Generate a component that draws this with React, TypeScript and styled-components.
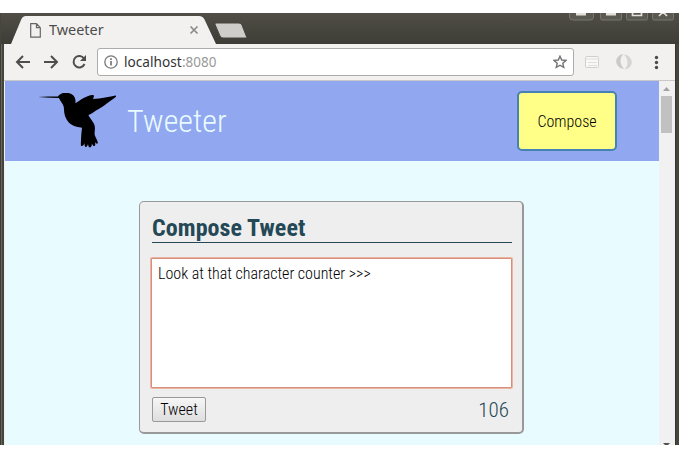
import React from "react";
import styled, { createGlobalStyle } from "styled-components";

const Global = createGlobalStyle`
  * { box-sizing: border-box; }
  body { margin: 0; background: #fff; overflow: hidden; }
  svg { display: block; }
`;

const Screen = styled.div`
  width: 679px;
  height: 458px;
  padding: 13px 0;
  background: #fff;
`;

const Window = styled.div`
  width: 679px;
  height: 432px;
  overflow: hidden;
  display: flex;
  flex-direction: column;
  background: #45443d;
  font-family: "Noto Sans", sans-serif;
`;

const TitleBar = styled.div`
  height: 31px;
  flex: none;
  display: flex;
  justify-content: space-between;
  background: linear-gradient(#504e46, #3d3c36);
  border-left: 1px solid #45443e;
`;

const TabStrip = styled.div`
  position: relative;
  width: 250px;
  height: 31px;
`;

const TabShapes = styled.svg`
  position: absolute;
  left: 0;
  top: 0;
`;

const TabContent = styled.div`
  position: relative;
  display: flex;
  align-items: center;
  height: 34px;
  padding-left: 29px;
`;

const Label = styled.span<{ $size: number; $color: string; $scale?: number }>`
  display: inline-block;
  white-space: nowrap;
  font-size: ${(p) => p.$size}px;
  line-height: 20px;
  color: ${(p) => p.$color};
  transform: scaleX(${(p) => p.$scale ?? 1});
  transform-origin: left center;
`;

const TabLabel = styled(Label)`
  width: 140px;
  margin-left: 8px;
`;

const Frame = styled.div`
  flex: 1;
  min-height: 0;
  display: flex;
  padding: 0 4px;
  background: linear-gradient(90deg, #3c3b35 0 1px, #68665e 1px 2px, #45433c 2px 675px, #36352f 675px 676px, #45443d 676px);
`;

const Browser = styled.div`
  flex: 1;
  min-width: 0;
  display: flex;
  flex-direction: column;
  background: #f2f1f0;
`;

const Toolbar = styled.div`
  height: 37px;
  flex: none;
  display: flex;
  align-items: center;
  background: #f2f1f0;
  border-bottom: 1px solid #c9c8c7;
`;

const NavIcons = styled.div`
  width: 93px;
`;

const AddressBar = styled.div`
  width: 477px;
  height: 28px;
  display: flex;
  align-items: center;
  padding: 0 6px;
  background: #fff;
  border: 1px solid #adacab;
  border-radius: 3px;
`;

const Address = styled.div`
  flex: 1;
  display: flex;
  margin-left: 6px;
`;

const Host = styled(Label)`
  width: 58px;
`;

const Page = styled.div`
  flex: 1;
  min-height: 0;
  display: flex;
  margin-left: 1px;
`;

const Content = styled.main`
  width: 654px;
  display: flex;
  flex-direction: column;
  background: #e8fbff;
  font-family: "Roboto Condensed", Roboto, sans-serif;
  font-stretch: 75%;
`;

const Header = styled.header`
  height: 80px;
  flex: none;
  display: flex;
  align-items: center;
  padding: 0 42px 0 33px;
  background: #91a7f0;
`;

const Brand = styled.h1`
  flex: 1;
  margin: 0 0 0 10px;
  font-size: 32px;
  line-height: 40px;
  font-weight: 300;
  color: #e8fbff;
`;

const ComposeButton = styled.button`
  width: 100px;
  height: 60px;
  padding: 0;
  border: 2px solid #4682b4;
  border-radius: 5px;
  background: #ffff88;
  color: #000;
  font: inherit;
  font-size: 16px;
  font-weight: 300;
`;

const Card = styled.section`
  width: 385px;
  height: 233px;
  margin: 40px 0 0 134px;
  padding: 12px 9px 0 12px;
  background: #eee;
  border: 1px solid #999;
  border-right-width: 2px;
  border-bottom-width: 2px;
  border-radius: 5px;
`;

const Heading = styled.h2`
  width: 360px;
  height: 29px;
  margin: 0 0 15px;
  border-bottom: 1px solid #244855;
  color: #244855;
  font-size: 24px;
  line-height: 28px;
  font-weight: 700;
  letter-spacing: 0.07px;
`;

const TweetText = styled.textarea`
  display: block;
  width: 361px;
  height: 130px;
  margin: 0 0 0 -1px;
  padding: 5px 6px;
  border: 1px solid #d98e77;
  border-radius: 1px;
  box-shadow: 0 0 0 1px #eab5a4;
  background: #fff;
  color: #000;
  font: inherit;
  font-size: 16px;
  line-height: 19px;
  font-weight: 300;
  resize: none;
  outline: none;
`;

const CardFooter = styled.div`
  width: 357px;
  display: flex;
  justify-content: space-between;
  align-items: center;
  margin-top: 9px;
`;

const TweetButton = styled.button`
  width: 54px;
  height: 25px;
  padding: 0;
  border: 1px solid #999;
  border-radius: 2px;
  background: linear-gradient(#f6f6f6, #dedede);
  color: #000;
  font: inherit;
  font-size: 16px;
  font-weight: 300;
`;

const Counter = styled.span`
  color: #244855;
  font-size: 21px;
  line-height: 24px;
  font-weight: 300;
`;

const Scrollbar = styled.div`
  width: 16px;
  display: flex;
  flex-direction: column;
  align-items: center;
  background: #f1f1f1;
`;

const Thumb = styled.div`
  width: 11px;
  height: 37px;
  margin-right: 1px;
  background: #c1c1c1;
`;

const Grow = styled.div`
  flex: 1;
`;

function Hummingbird() {
  return (
    <svg width="79" height="56" viewBox="38 91.700 79 56">
      <path
        fill="#000"
        d="M38 95.6 L48 95.1 L58 95.1 C60.500 91.8 64 91.200 67 91.400 C72 92 75 95 75.400 98.500 L75.600 102 C80 98.500 87 94 92.500 93.600 C94.500 93.400 94 95.500 93 97.800 C101 97.300 110 95.400 115.500 94.200 C117 94.400 115.600 96 113.800 97.200 C107 102 101 107 96 109.200 C93 111.500 91 112.500 88.400 113.800 C89 116 92 119 94 122.500 C96 127 94 130.500 94.800 134 C96 137 98 140 97.800 142 C96.800 143 95.400 141.500 95 141 C95.600 143.500 95.200 145 93.800 144.800 C92.800 144.500 92.500 143 91.800 142.500 C92 145.500 90.500 146.500 89.300 146 C88.300 145.500 88.400 143.500 87.900 143 C87.500 145 86 146.300 85.200 145.500 C84.300 144.500 84.600 142.600 84.500 142 C83.800 144 82 145.500 81 144.400 C80.500 141 81.300 137 81.300 133 L82 126.500 C79 125.800 73 125.500 69 121.500 C65.500 118 64 113 64 108 C64 103.500 61.500 101.500 60 98.800 L58.800 96.700 L50 96.500 Z"
      />
    </svg>
  );
}

function Tabs() {
  return (
    <TabStrip>
      <TabShapes width="250" height="31" viewBox="1 13 250 31">
        <path d="M11 44 L21 20 Q22.5 16 26 16 H199 Q203 16 204.500 19.500 L216 44 Z" fill="#f2f1f0" />
        <path d="M215.500 23 H239 Q241 23 242 25 L247 38 H223 Q221 38 220 36 L214.800 24 Z" fill="#cfcdca" stroke="#45443f" />
      </TabShapes>
      <TabContent>
        <svg width="11" height="15" viewBox="0 0 11 15" fill="none" stroke="#666" strokeWidth="1.2">
          <path d="M.7 .7 H6.500 L10.300 4.700 V14.200 H.7 Z M6.500 .7 V4.700 H10.300" />
        </svg>
        <TabLabel $size={14} $color="#4c4c4c" $scale={1.03}>Tweeter</TabLabel>
        <svg width="10" height="10" viewBox="0 0 10 10" stroke="#8b8a88" strokeWidth="1.7">
          <path d="M1.500 1.500 L8.500 8.500 M8.500 1.500 L1.500 8.500" />
        </svg>
      </TabContent>
    </TabStrip>
  );
}

function WindowControls() {
  return (
    <svg width="114" height="31" viewBox="565 13 114 31">
      <g fill="#5b5a52" stroke="#77766e">
        <path d="M569.500 10 V17 Q569.500 20 573 20 H590 Q593.500 20 593.500 17 V10" />
        <path d="M600.500 10 V18.500 Q600.500 20 602 20 H620 Q621.500 20 621.500 18.500 V10" />
        <path d="M626.500 10 V18.500 Q626.500 20 628 20 H646 Q647.500 20 647.500 18.500 V10" />
        <path d="M652.500 10 V18.500 Q652.500 20 654 20 H672 Q673.500 20 673.500 18.500 V10" />
      </g>
      <path d="M576 13 H586 V15.500 H576 Z M606 13 H616 V15.500 H606 Z" fill="#e1e0dc" />
      <path d="M632.500 11 V15.500 H641.500 V11 M659 16 L667 8 M659 8 L667 16" fill="none" stroke="#e1e0dc" strokeWidth="1.7" />
    </svg>
  );
}

function Navigation() {
  return (
    <svg width="93" height="28" viewBox="4 48 93 28" fill="none" stroke="#4d4d4d" strokeWidth="2">
      <path d="M30 62 H17.500 M23 56 L17 62 L23 68 M44 62 H57 M51 56 L57 62 L51 68" />
      <path d="M84 58.500 A5.700 5.700 0 1 0 84.500 64" />
      <path d="M86 55 V61 H80 Z" fill="#4d4d4d" stroke="none" />
    </svg>
  );
}

function ToolbarActions() {
  return (
    <svg width="97" height="28" viewBox="574 48 97 28">
      <rect x="585.500" y="56.500" width="13" height="11" rx="1" fill="#f8f8f8" stroke="#d0cfce" />
      <path d="M586 59 H599 M588 62.500 H597 M588 65.500 H597" stroke="#dfdedd" />
      <path d="M623.500 54 C617 55 614 61 618 66 C619.500 68 622 69 624 69 C620 65 619 58 623.500 54 Z" fill="#cbcaca" />
      <path d="M624.500 69.500 C631 68.500 634 62.500 630 57.500 C628.500 55.500 626 54.500 624 54.500 C628 58.500 629 65.500 624.500 69.500 Z" fill="#d6d5d4" />
      <g fill="#4b4b4b">
        <circle cx="656.500" cy="57.500" r="1.700" />
        <circle cx="656.500" cy="62.500" r="1.700" />
        <circle cx="656.500" cy="67.500" r="1.700" />
      </g>
    </svg>
  );
}

export default function App() {
  return (
    <Screen>
      <Global />
      <Window>
        <TitleBar>
          <Tabs />
          <WindowControls />
        </TitleBar>
        <Frame>
          <Browser>
            <Toolbar>
              <NavIcons><Navigation /></NavIcons>
              <AddressBar>
                <svg width="14" height="14" viewBox="0 0 14 14" fill="none" stroke="#777" strokeWidth="1.300">
                  <circle cx="7" cy="7" r="6.200" />
                  <path d="M7 6 V10.500 M7 3.300 V5" strokeWidth="1.700" />
                </svg>
                <Address>
                  <Host $size={14} $color="#333" $scale={0.975}>localhost</Host>
                  <Label $size={14} $color="#999" $scale={0.96}>:8080</Label>
                </Address>
                <svg width="14" height="14" viewBox="0 0 14 14" fill="none" stroke="#727272" strokeWidth="1.400">
                  <path d="M7 1.200 L8.700 5 L13 5.400 L9.800 8.200 L10.700 12.400 L7 10.200 L3.300 12.400 L4.200 8.200 L1 5.400 L5.300 5 Z" />
                </svg>
              </AddressBar>
              <ToolbarActions />
            </Toolbar>
            <Page>
              <Content>
                <Header>
                  <Hummingbird />
                  <Brand>Tweeter</Brand>
                  <ComposeButton>Compose</ComposeButton>
                </Header>
                <Card>
                  <Heading>Compose Tweet</Heading>
                  <TweetText readOnly spellCheck={false} value="Look at that character counter >>>" />
                  <CardFooter>
                    <TweetButton>Tweet</TweetButton>
                    <Counter>106</Counter>
                  </CardFooter>
                </Card>
              </Content>
              <Scrollbar>
                <svg width="16" height="15" viewBox="0 0 16 15"><path d="M4 10 L7.500 6 L11 10 Z" fill="#a3a3a3" /></svg>
                <Thumb />
                <Grow />
                <svg width="16" height="2" viewBox="0 0 16 2"><path d="M4 0 H11 L9 2 H6 Z" fill="#505050" /></svg>
              </Scrollbar>
            </Page>
          </Browser>
        </Frame>
      </Window>
    </Screen>
  );
}
